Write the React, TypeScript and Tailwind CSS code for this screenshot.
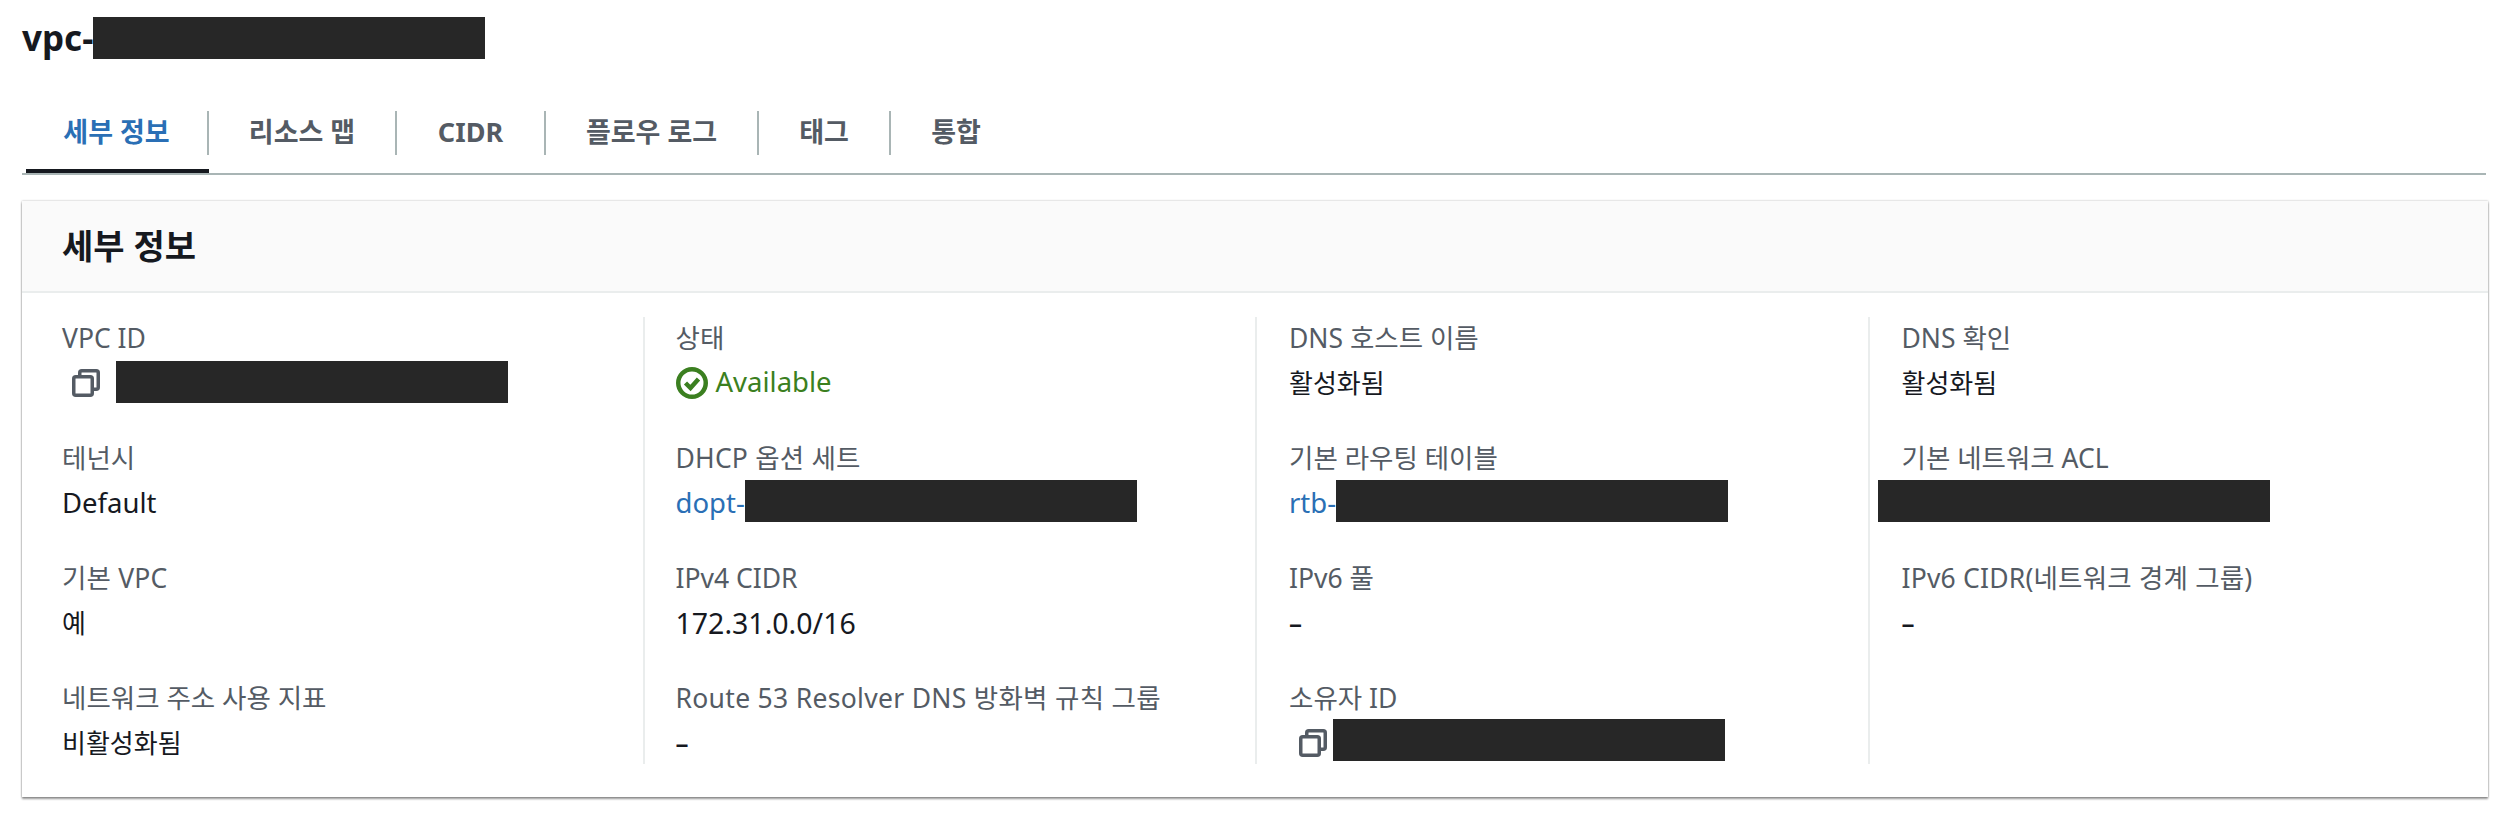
import React from "react";

const FONT = "font-['Noto_Sans','Noto_Sans_CJK_KR',sans-serif]";

const Redacted = ({ className = "" }: { className?: string }) => (
  <span className={`inline-block h-[42px] w-[392px] shrink-0 bg-[#272727] ${className}`} />
);

const CopyIcon = ({ className = "" }: { className?: string }) => (
  <svg className={`shrink-0 ${className}`} width="28" height="28" viewBox="0 0 28 28" fill="none" stroke="#545b64" strokeWidth="3.5" strokeLinejoin="round">
    <rect x="1.75" y="7.75" width="18.5" height="18.5" rx="2" />
    <path d="M7.75 7V3.75a2 2 0 0 1 2-2h14.5a2 2 0 0 1 2 2v14.5a2 2 0 0 1-2 2h-3.5" />
  </svg>
);

const StatusIcon = () => (
  <svg className="shrink-0" width="32" height="32" viewBox="0 0 32 32" fill="none" stroke="#3b7f20">
    <circle cx="16" cy="16" r="13.75" strokeWidth="4.5" />
    <path d="M9.5 16l5 5 8-9" strokeWidth="4.5" />
  </svg>
);

const Field = ({ label, children, last = false, labelClass = "" }: { label: string; children: React.ReactNode; last?: boolean; labelClass?: string }) => (
  <div className={last ? "h-[87px]" : "h-[120px]"}>
    <div className={`flex h-[42px] items-center text-[26.5px] text-[#545b64] whitespace-nowrap ${labelClass}`}>{label}</div>
    <div className="flex h-[48px] items-center text-[#16191f] whitespace-nowrap">{children}</div>
  </div>
);

const Dash = () => <span className="font-semibold">–</span>;

const tabs = ["세부 정보", "리소스 맵", "CIDR", "플로우 로그", "태그", "통합"];
const tabWidths = ["w-[183px]", "w-[188px]", "w-[149px]", "w-[213px]", "w-[132px]", "w-[130px]"];

export default function App() {
  return (
    <div className={`h-[822px] w-full bg-white ${FONT}`}>
      <div className="flex h-[59px] items-end pl-[22px]">
        <span className="text-[35px] font-bold leading-[42px] text-[#16191f]">vpc-</span>
        <Redacted />
      </div>

      <div className="mt-[52px] ml-[22px] mr-[26px] h-[64px] border-b-2 border-[#a9b5b5] pl-[4px]">
        <div className="flex">
          {tabs.map((tab, i) => (
            <div key={tab} className={`h-[62px] ${tabWidths[i]} ${i === 0 ? "border-b-4 border-[#16191f]" : ""}`}>
              <div className={`flex h-[44px] items-center justify-center pb-[2px] text-[27px] font-bold whitespace-nowrap ${i < 5 ? "border-r-2 border-[#a9b5b5]" : ""} ${i === 0 ? "text-[#2a6fb5]" : "text-[#545b64]"}`}>
                {tab}
              </div>
            </div>
          ))}
        </div>
      </div>

      <div className="mt-[26px] ml-[22px] h-[596px] w-[2466px] bg-white shadow-[0_2px_2px_rgba(0,0,0,0.4),0_0_2px_rgba(0,0,0,0.3)]">
        <div className="flex h-[92px] items-center border-b-2 border-[#eaeded] bg-[#fafafa] pl-[40px] text-[34px] font-bold text-[#16191f]">
          세부 정보
        </div>
        <div className="grid grid-cols-[repeat(4,612.5px)] pt-[24px] pl-[8px] text-[26px] leading-[36px]">
          <div className="border-l-2 border-transparent pl-[30px]">
            <Field label="VPC ID">
              <CopyIcon className="ml-[10px]" />
              <Redacted className="ml-[16px] mt-[-2px]" />
            </Field>
            <Field label="테넌시"><span className="text-[27.5px]">Default</span></Field>
            <Field label="기본 VPC" labelClass="tracking-[0.2px]">예</Field>
            <Field label="네트워크 주소 사용 지표" last>비활성화됨</Field>
          </div>
          <div className="border-l-2 border-[#eaeded] pl-[31px]">
            <Field label="상태">
              <StatusIcon />
              <span className="ml-[8px] mt-[-2px] text-[27.5px] text-[#3b7f20]">Available</span>
            </Field>
            <Field label="DHCP 옵션 세트" labelClass="tracking-[0.2px]">
              <span className="text-[27.5px] text-[#2a6fb5]">dopt-</span>
              <Redacted className="mt-[-4px]" />
            </Field>
            <Field label="IPv4 CIDR"><span className="text-[28.5px]">172.31.0.0/16</span></Field>
            <Field label="Route 53 Resolver DNS 방화벽 규칙 그룹" labelClass="tracking-[0.3px]" last><Dash /></Field>
          </div>
          <div className="border-l-2 border-[#eaeded] pl-[32px]">
            <Field label="DNS 호스트 이름">활성화됨</Field>
            <Field label="기본 라우팅 테이블">
              <span className="text-[27.5px] text-[#2a6fb5]">rtb-</span>
              <Redacted className="mt-[-4px]" />
            </Field>
            <Field label="IPv6 풀"><Dash /></Field>
            <Field label="소유자 ID" last>
              <CopyIcon className="ml-[10px]" />
              <Redacted className="ml-[6px] mt-[-6px]" />
            </Field>
          </div>
          <div className="border-l-2 border-[#eaeded] pl-[32px]">
            <Field label="DNS 확인">활성화됨</Field>
            <Field label="기본 네트워크 ACL">
              <Redacted className="ml-[-24px] mt-[-4px]" />
            </Field>
            <Field label="IPv6 CIDR(네트워크 경계 그룹)" labelClass="tracking-[0.2px]"><Dash /></Field>
          </div>
        </div>
      </div>
    </div>
  );
}
